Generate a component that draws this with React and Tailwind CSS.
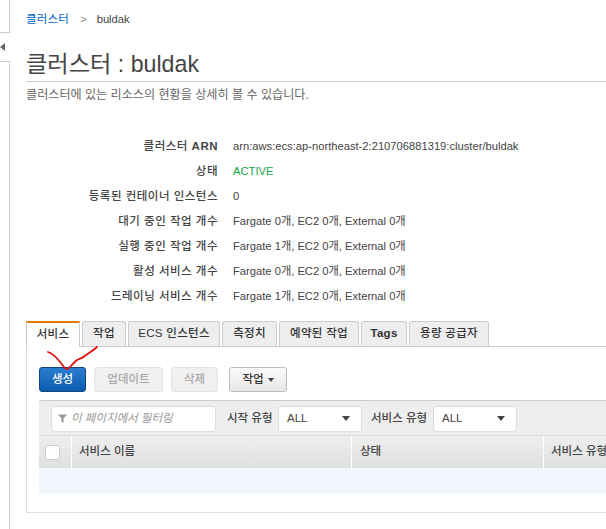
import React from "react";

const rows = [
  ["대기 중인 작업 개수", "Fargate 0개, EC2 0개, External 0개"],
  ["실행 중인 작업 개수", "Fargate 1개, EC2 0개, External 0개"],
  ["활성 서비스 개수", "Fargate 0개, EC2 0개, External 0개"],
  ["드레이닝 서비스 개수", "Fargate 1개, EC2 0개, External 0개"],
];

function Row({ label, children }) {
  return (
    <div className="flex h-[25px] items-center text-[#444]">
      <div className="w-[192px] text-right text-[11.5px] font-medium tracking-[0.5px]">{label}</div>
      <div className="ml-[15px] whitespace-nowrap text-[11.2px]">{children}</div>
    </div>
  );
}

function Tab({ children, active, w }) {
  return (
    <div
      className={
        active
          ? "relative z-10 -mb-px mr-[2px] flex h-[26px] items-center justify-center border-x border-x-[#ccc] border-t-[2px] border-t-[#e07b00] bg-white text-[#333]"
          : "mr-[2px] flex h-[25px] items-center justify-center rounded-t-[3px] border border-b-0 border-[#ccc] bg-[#eee] text-[#333]"
      }
      style={{ width: w }}
    >
      {children}
    </div>
  );
}

function Select({ w }) {
  return (
    <div className="flex h-[26px] items-center justify-between rounded-[3px] border border-[#ddd] bg-white pl-[8px] pr-[11px] text-[#444]" style={{ width: w }}>
      <span>ALL</span>
      <span className="h-0 w-0 border-x-[4px] border-t-[5px] border-x-transparent border-t-[#444]" />
    </div>
  );
}

export default function App() {
  return (
    <div className="flex h-[529px] w-[606px] overflow-hidden bg-white font-['Liberation_Sans','Noto_Sans_CJK_KR',sans-serif] text-[#444]">
      <div className="flex w-[10px] shrink-0 flex-col">
        <div className="h-[33px] border-b border-r border-[#ccc]" />
        <div className="flex h-[28px] items-center">
          <span className="h-0 w-0 border-y-[4px] border-r-[5px] border-y-transparent border-r-[#666]" />
        </div>
        <div className="flex-1 border-r border-t border-[#ccc]" />
      </div>

      <div className="ml-[16px] flex w-[640px] shrink-0 flex-col">
        <div className="flex h-[38px] items-center pt-[1px] text-[11.2px]">
          <span className="text-[11.5px] tracking-[0.2px] text-[#0066c0]">클러스터</span>
          <span className="ml-[11px] mr-[10px] text-[#888]">&gt;</span>
          <span>buldak</span>
        </div>
        <div className="h-[44px] border-b border-[#ccc] pt-[8px] text-[23.2px] leading-[36px] text-[#444]">
          클러스터 : buldak
        </div>
        <div className="mt-[5px] h-[16px] text-[12.1px] leading-[16px] text-[#666]">
          클러스터에 있는 리소스의 현황을 상세히 볼 수 있습니다.
        </div>

        <div className="mt-[31px] flex flex-col">
          <Row label={<>클러스터 <b>ARN</b></>}>arn:aws:ecs:ap-northeast-2:210706881319:cluster/buldak</Row>
          <Row label="상태"><span className="text-[#16a34a]">ACTIVE</span></Row>
          <Row label="등록된 컨테이너 인스턴스">0</Row>
          {rows.map(([l, v]) => (
            <Row key={l} label={l}>{v}</Row>
          ))}
        </div>

        <div className="mt-[12px] flex h-[26px] items-end border-b border-[#ccc] text-[11.5px] font-medium tracking-[0.3px]">
          <Tab active w={54}>서비스</Tab>
          <Tab w={44}>작업</Tab>
          <Tab w={92}>ECS 인스턴스</Tab>
          <Tab w={55}>측정치</Tab>
          <Tab w={80}>예약된 작업</Tab>
          <Tab w={46}><b>Tags</b></Tab>
          <Tab w={80}>용량 공급자</Tab>
        </div>

        <div className="relative h-[166px] border-x border-b border-[#ddd] px-[12px]">
          <div className="mt-[20px] flex h-[25px] text-[11.5px] font-medium">
            <div className="flex w-[47px] items-center justify-center rounded-[3px] border border-[#15457a] bg-gradient-to-b from-[#2a7dd0] to-[#0a5cb0] text-white">생성</div>
            <div className="ml-[8px] flex w-[69px] items-center justify-center rounded-[3px] border border-[#e4e4e4] bg-[#f0f0f0] text-[#a8a8a8]">업데이트</div>
            <div className="ml-[8px] flex w-[47px] items-center justify-center rounded-[3px] border border-[#e4e4e4] bg-[#f0f0f0] text-[#a8a8a8]">삭제</div>
            <div className="ml-[11px] flex w-[58px] items-center justify-center gap-[4px] rounded-[3px] border border-[#bbb] bg-gradient-to-b from-[#fafafa] to-[#e8e8e8] text-[#333]">
              작업
              <span className="h-0 w-0 border-x-[3.5px] border-t-[4px] border-x-transparent border-t-[#444]" />
            </div>
          </div>

          <div className="mt-[8px] flex h-[35px] items-center border-t border-[#ccc] bg-[#eee] pl-[12px] pt-[1px] text-[11.5px]">
            <div className="flex h-[26px] w-[165px] items-center rounded-[3px] border border-[#ddd] bg-white pl-[6px] text-[#999]">
              <svg width="9" height="9" viewBox="0 0 9 9" className="mr-[4px]"><path d="M0 0.5H9L5.6 4.6V9L3.4 7.6V4.6Z" fill="#999" /></svg>
              <span className="italic">이 페이지에서 필터링</span>
            </div>
            <span className="ml-[11px] mr-[3px] w-[48px] whitespace-nowrap font-medium">시작 유형</span>
            <Select w={84} />
            <span className="ml-[9px] mr-[4px] w-[58px] whitespace-nowrap font-medium">서비스 유형</span>
            <Select w={84} />
          </div>

          <div className="flex h-[33px] items-center border-t border-[#ddd] bg-gradient-to-b from-[#eee] to-[#e0e0e0] text-[11.5px] font-medium">
            <div className="flex h-full w-[33px] items-center border-r border-white pl-[6px]">
              <span className="h-[15px] w-[15px] rounded-[3px] border border-[#ccc] bg-white" />
            </div>
            <div className="flex h-full w-[280px] items-center border-r border-white pl-[7px]">서비스 이름</div>
            <div className="flex h-full w-[192px] items-center border-r border-white pl-[8px]">상태</div>
            <div className="flex h-full flex-1 items-center whitespace-nowrap pl-[7px]">서비스 유형</div>
          </div>
          <div className="h-[26px] bg-[#f1f7fd]" />

          <svg className="absolute left-[20px] top-[-1px] z-20" width="56" height="28" viewBox="0 0 56 28" fill="none">
            <path d="M1 6C6 7.5 10 12 14 17C16 20 18 23 20 23C23 22 26 17 30 14C33 12.5 36 12 39 9C43 6 47 4 50 1" stroke="#e01010" strokeWidth="1.8" strokeLinecap="round" />
          </svg>
        </div>
      </div>
    </div>
  );
}
